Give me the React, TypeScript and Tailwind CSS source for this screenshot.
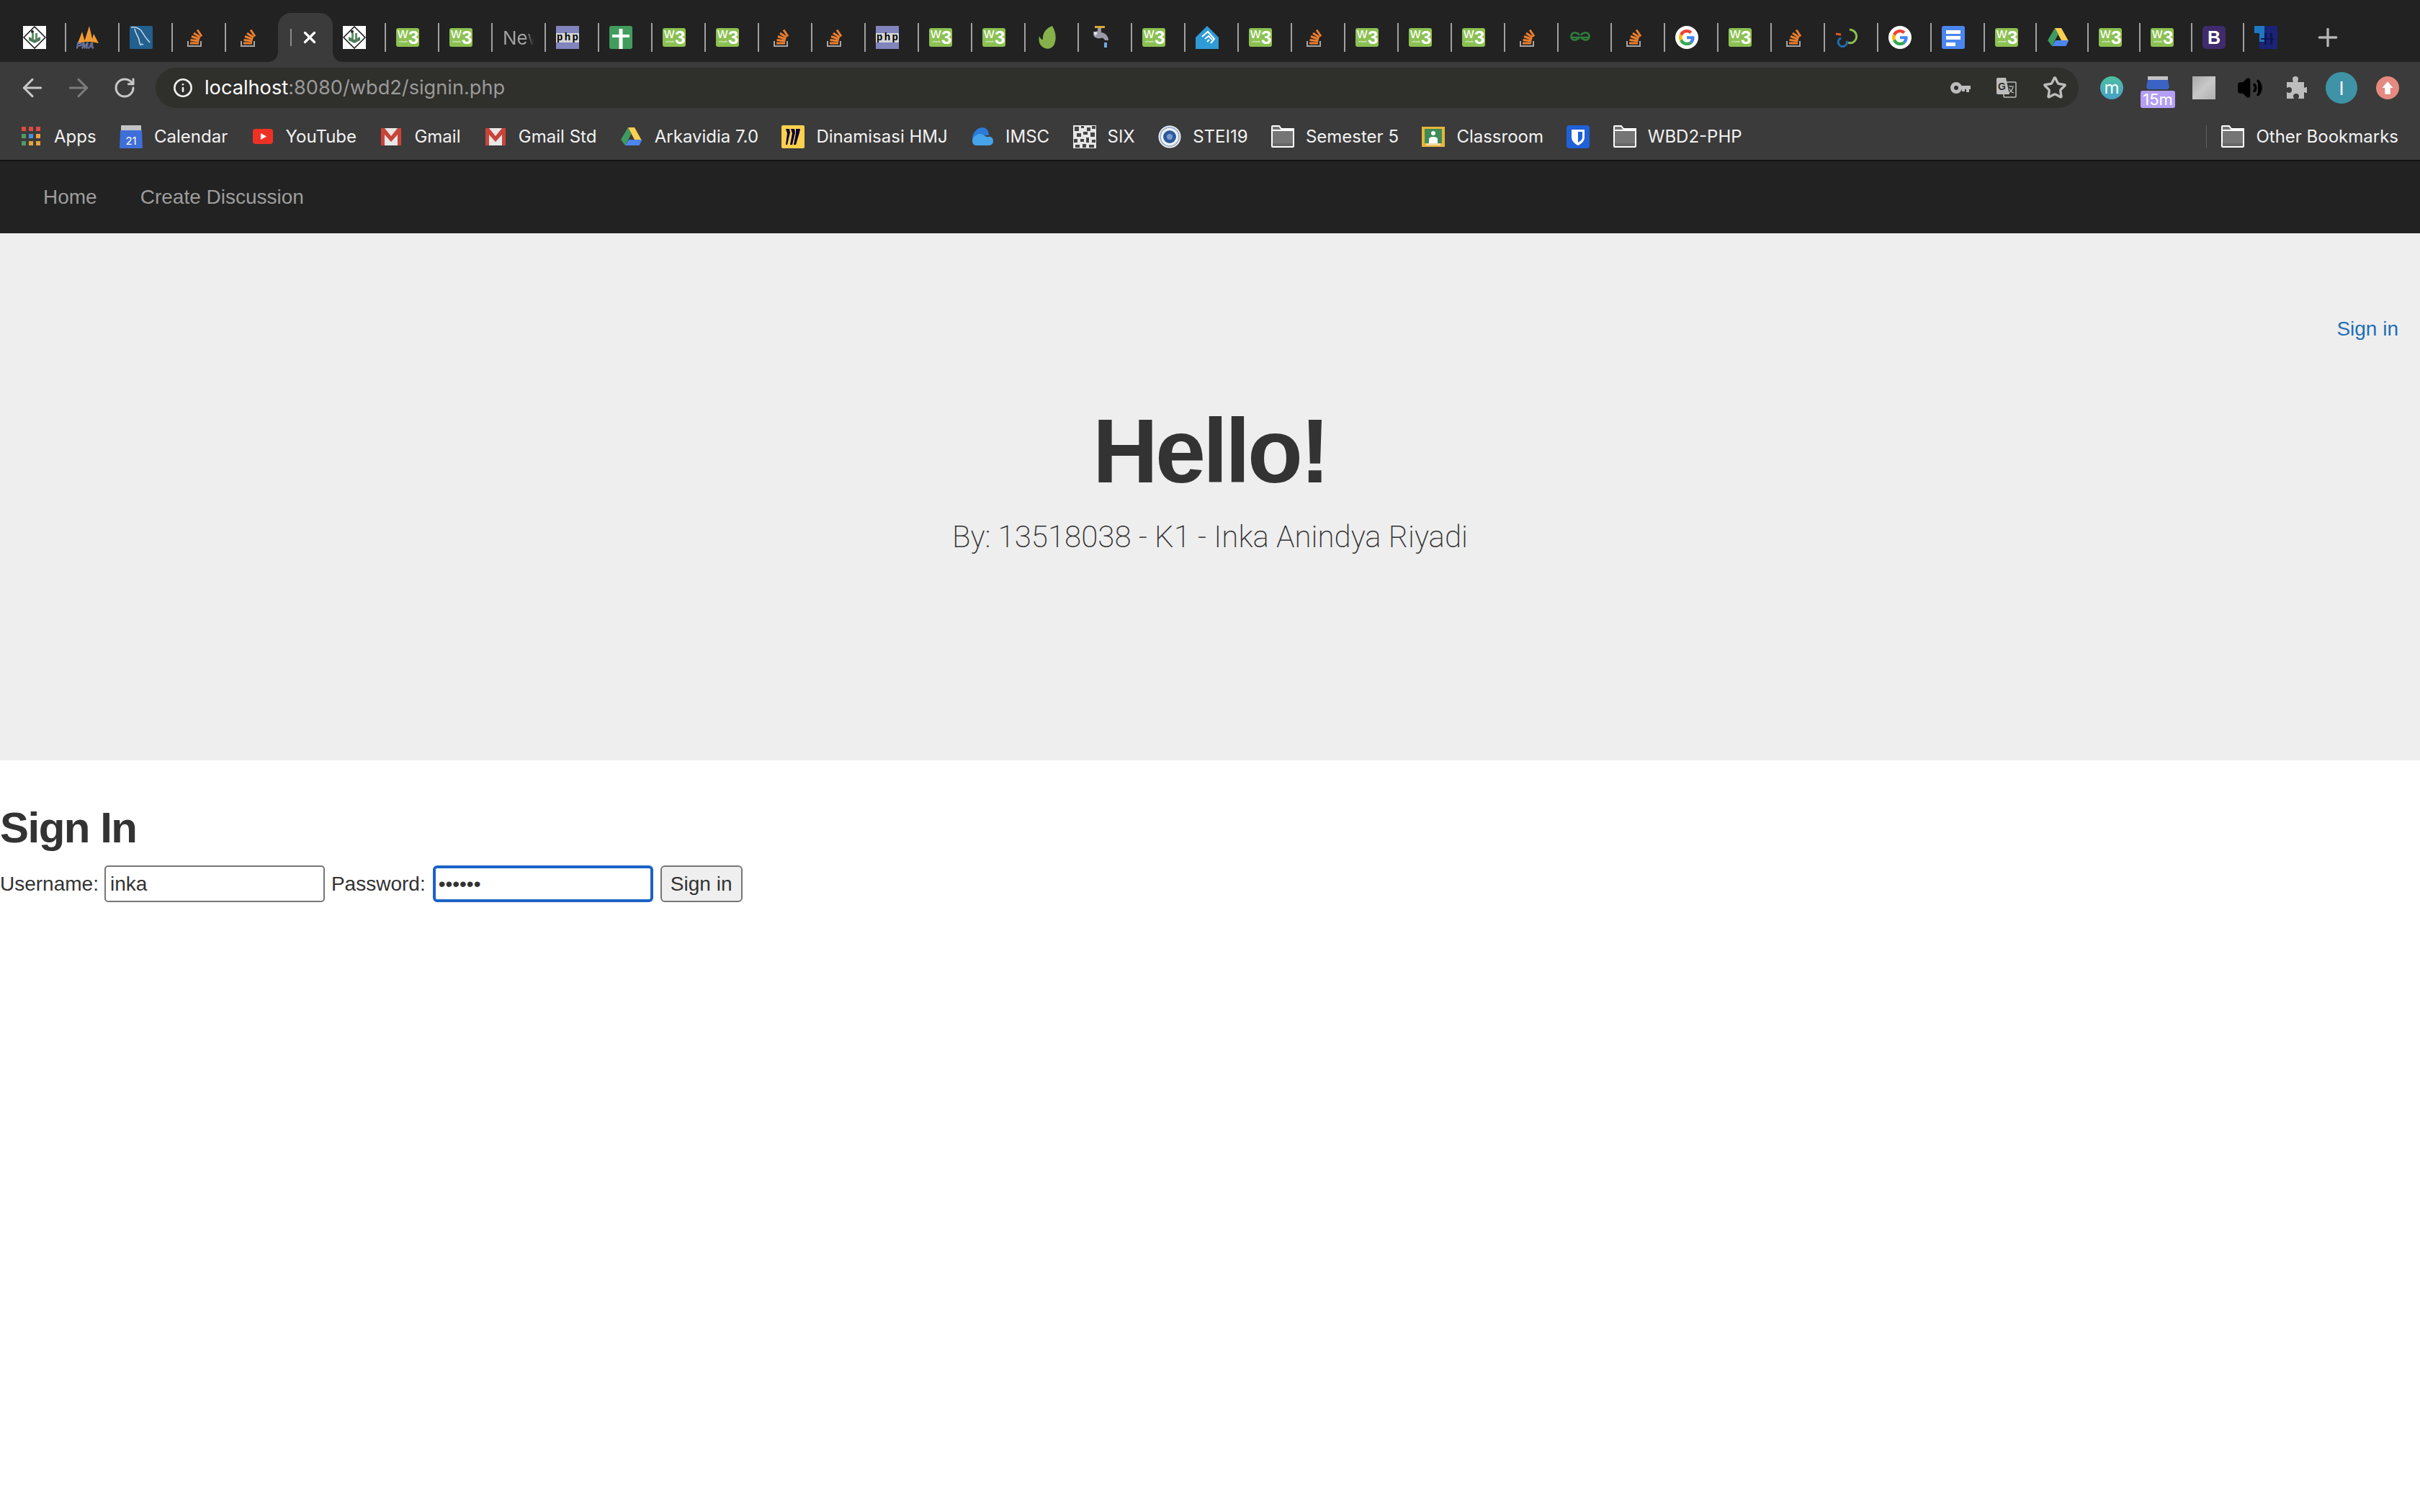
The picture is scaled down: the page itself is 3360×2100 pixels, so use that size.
import React from 'react';
import { ArrowLeft, ArrowRight, RotateCw, Info, Star, Plus, X, Volume2 } from 'lucide-react';

const Svg = ({ children, className = 'w-[32px] h-[32px]' }: { children: React.ReactNode; className?: string }) => (
  <svg viewBox="0 0 32 32" className={`shrink-0 ${className}`}>
    {children}
  </svg>
);

const W3 = () => (
  <Svg>
    <rect x="0" y="3" width="32" height="26" rx="3" fill="#8cc152" />
    <text x="2" y="17" fontSize="20" fill="#fff" fontFamily="Liberation Sans, sans-serif">w</text>
    <text x="17" y="25" fontSize="26" fontWeight="700" fill="#fff" fontFamily="Liberation Sans, sans-serif">3</text>
    <text x="4" y="23" fontSize="3.500" fill="#fff" fontFamily="Liberation Sans, sans-serif">schools</text>
  </Svg>
);

const StackOverflow = () => (
  <Svg>
    <path d="M7 21v7h18v-7" fill="none" stroke="#a6a6a6" strokeWidth="2" />
    <g stroke="#ee7f2d" strokeWidth="3">
      <path d="M10 24h12" />
      <path d="M10.500 19.500l12 1.500" />
      <path d="M12 14.500l11 4" />
      <path d="M15 10l9 6" />
      <path d="M20 5.500l6 9" />
    </g>
  </Svg>
);

const Tutorials = () => (
  <Svg>
    <rect width="32" height="32" fill="#fff" />
    <path d="M16 1L31 16 16 31 1 16z" fill="#fff" stroke="#111" strokeWidth="1.500" />
    <path d="M8 15l8 4 8-4v5l-8 4-8-4z" fill="#4e7a58" />
    <path d="M12 10h3v8h-3zM17 10h3v8h-3z" fill="#5f8f69" />
    <circle cx="13" cy="8" r="2" fill="#222" />
  </Svg>
);

const Pma = () => (
  <Svg>
    <path d="M2 24L8 8l4 14zM11 22L18 0l5 22zM21 22l3-11 7 13z" fill="#f19a32" />
    <text x="0" y="31" fontSize="11" fontWeight="700" fontStyle="italic" fill="#3f4a8c" stroke="#cfd3e8" strokeWidth="0.300" fontFamily="Liberation Sans, sans-serif">PMA</text>
  </Svg>
);

const MySql = () => (
  <Svg>
    <rect width="32" height="32" rx="2" fill="#21608f" />
    <path d="M2 2c8-1 14 3 17 9s6 8 9 12M7 4c1 7 5 10 6 15s1 7 3 8M16 25l3 1" fill="none" stroke="#c6d8e4" strokeWidth="1.600" />
  </Svg>
);

const Php = () => (
  <Svg>
    <rect width="32" height="32" fill="#8284bd" />
    <rect y="10" width="32" height="13" fill="#d6d6d6" />
    <text x="1" y="20" fontSize="14" fontWeight="700" fill="#000" fontFamily="Liberation Mono, monospace" textLength="30">php</text>
  </Svg>
);

const GreenPlus = () => (
  <Svg>
    <rect width="32" height="32" rx="3" fill="#439c5d" />
    <path d="M13.500 4h5v8H28v4h-9.500v16h-5V16H4v-4h9.500z" fill="#fff" />
  </Svg>
);

const Evernote = () => (
  <Svg>
    <path d="M23 0c5 8 6 18 3 25-2 5-7 8-13 6C7 29 3 23 5 14c1 3 3 5 5 5C9 11 14 3 23 0z" fill="#86b24c" />
  </Svg>
);

const Faucet = () => (
  <Svg>
    <rect x="8" y="0" width="14" height="3" fill="#d7a93a" />
    <path d="M12 3h5v6c6 1 10 5 10 11h-5c-1-3-3-4-6-3-5 1-10-1-10-6 0-3 3-3 6-4z" fill="#9a99a8" />
    <path d="M6 8l6 1-3 5z" fill="#e4e4ea" />
    <rect x="21" y="23" width="4" height="7" fill="#6ea8e8" />
  </Svg>
);

const DropHouse = () => (
  <Svg>
    <path d="M16 0l16 16v16H0V16z" fill="#2f9bd6" />
    <path d="M9 15l8-7 9 10-5 6M13 18l5-4 5 5M16 22l3-3" fill="none" stroke="#fff" strokeWidth="2" />
  </Svg>
);

const Gfg = () => (
  <Svg>
    <path d="M15 13c-2-4-9-5-11-1-2 5 2 9 7 7 2-1 3-2 4-3H5M17 13c2-4 9-5 11-1 2 5-2 9-7 7-2-1-3-2-4-3h10" fill="none" stroke="#2f7d3c" strokeWidth="2.500" />
  </Svg>
);

const GoogleG = () => (
  <Svg>
    <circle cx="16" cy="16" r="16" fill="#fff" />
    <g transform="translate(5 5) scale(.46)">
      <path fill="#EA4335" d="M24 9.500c3.540 0 6.710 1.220 9.210 3.600l6.850-6.850C35.900 2.380 30.470 0 24 0 14.620 0 6.510 5.380 2.560 13.220l7.980 6.190C12.430 13.720 17.740 9.500 24 9.500z" />
      <path fill="#4285F4" d="M46.980 24.550c0-1.570-.15-3.090-.38-4.550H24v9.020h12.940c-.58 2.960-2.260 5.480-4.780 7.180l7.730 6c4.510-4.180 7.090-10.360 7.090-17.650z" />
      <path fill="#FBBC05" d="M10.530 28.590c-.48-1.450-.76-2.990-.76-4.590s.27-3.140.76-4.590l-7.980-6.190C.92 16.460 0 20.120 0 24c0 3.880.92 7.540 2.560 10.780l7.970-6.190z" />
      <path fill="#34A853" d="M24 48c6.480 0 11.930-2.130 15.890-5.810l-7.730-6c-2.150 1.450-4.920 2.300-8.160 2.300-6.260 0-11.570-4.220-13.470-9.910l-7.980 6.190C6.510 42.620 14.620 48 24 48z" />
    </g>
  </Svg>
);

const Swirl = () => (
  <Svg>
    <path d="M1 11l7 1" stroke="#dd5a2b" strokeWidth="3" fill="none" />
    <path d="M8 17a6 6 0 1 0 8 4" stroke="#1f6fb5" strokeWidth="3" fill="none" />
    <path d="M20 5c8 1 11 7 9 13-2 5-7 7-11 5" stroke="#8cc152" strokeWidth="3" fill="none" />
  </Svg>
);

const Docs = () => (
  <Svg>
    <rect width="32" height="32" rx="3" fill="#4a86ee" />
    <path d="M6 6h20v5H6zM6 14h20v5H6zM6 23h13v5H6z" fill="#fff" />
  </Svg>
);

const Drive = () => (
  <Svg>
    <path d="M11 3h9l10 18h-9.500z" fill="#fbcf52" />
    <path d="M11 3l4.500 9L7 28 1 20z" fill="#3f9b60" />
    <path d="M7 28l5-8h18.500l-4 8z" fill="#4a86ee" />
  </Svg>
);

const Bootstrap = () => (
  <Svg>
    <rect width="32" height="32" rx="5" fill="#3f2c6d" />
    <text x="16" y="25" fontSize="25" fontWeight="700" fill="#fff" textAnchor="middle" fontFamily="Liberation Sans, sans-serif">B</text>
  </Svg>
);

const DarkBlue = () => (
  <Svg>
    <path d="M0 0h14v22H7V10H0z" fill="#1e78c2" />
    <path d="M14 0h18v32H7V22h7z" fill="#1b2376" />
    <path d="M14 10h3v16h-3zM22 10h3v16h-3zM9 17h18v2H9z" fill="#0f1550" />
  </Svg>
);

const tabIcons: Record<string, React.FC> = {
  w3: W3,
  so: StackOverflow,
  tp: Tutorials,
  pma: Pma,
  mysql: MySql,
  php: Php,
  plus: GreenPlus,
  evernote: Evernote,
  faucet: Faucet,
  drop: DropHouse,
  gfg: Gfg,
  g: GoogleG,
  swirl: Swirl,
  docs: Docs,
  drive: Drive,
  b: Bootstrap,
  blue: DarkBlue,
};

const tabs = [
  'tp', 'pma', 'mysql', 'so', 'so', 'active', 'tp', 'w3', 'w3', 'new', 'php', 'plus', 'w3', 'w3', 'so', 'so', 'php', 'w3', 'w3', 'evernote', 'faucet', 'w3',
  'drop', 'w3', 'so', 'w3', 'w3', 'w3', 'so', 'gfg', 'so', 'g', 'w3', 'so', 'swirl', 'g', 'docs', 'w3', 'drive', 'w3', 'w3', 'b', 'blue',
];

const ActiveTab = () => (
  <div className="relative flex h-[68px] w-[76px] -ml-[2px] shrink-0 items-center rounded-t-[18px] bg-[#3b3b3b] pl-[17px]">
    <svg viewBox="0 0 14 14" className="absolute bottom-0 -left-[14px] h-[14px] w-[14px]">
      <path d="M14 0v14H0c8 0 14-6 14-14z" fill="#3b3b3b" />
    </svg>
    <svg viewBox="0 0 14 14" className="absolute -right-[14px] bottom-0 h-[14px] w-[14px]">
      <path d="M0 0v14h14C6 14 0 8 0 0z" fill="#3b3b3b" />
    </svg>
    <div className="h-[24px] w-[2px] bg-[#8a8a8a]" />
    <X className="ml-[12px] h-[26px] w-[26px] text-white" strokeWidth={3} />
  </div>
);

const TabStrip = () => (
  <div className="flex h-[86px] items-start bg-[#222222] pt-[18px] pl-[18px]">
    {tabs.map((name, i) => {
      if (name === 'active') return <ActiveTab key={i} />;
      const Icon = tabIcons[name];
      return (
        <div key={i} className={`flex h-[68px] shrink-0 items-center justify-between pl-[14px] ${i > 36 ? 'w-[72px]' : 'w-[74px]'}`}>
          {name === 'new' ? (
            <span className="w-[44px] overflow-hidden bg-linear-to-r from-[#a3a3a3] from-70% to-[#222222] bg-clip-text font-['Inter',sans-serif] text-[26px] whitespace-nowrap text-transparent">
              New
            </span>
          ) : (
            <Icon />
          )}
          {i !== 4 && i !== 42 ? <div className="h-[40px] w-[2px] bg-[#a0a0a0]" /> : null}
        </div>
      );
    })}
    <Plus className="ml-[24px] mt-[14px] h-[40px] w-[40px] text-[#b5b5b5]" strokeWidth={2} />
  </div>
);

const Toolbar = () => (
  <div className="flex h-[64px] items-center bg-[#3b3b3b] pt-[8px] pl-[25px]">
    <ArrowLeft className="h-[40px] w-[40px] text-[#c8c8c8]" strokeWidth={1.8} />
    <ArrowRight className="ml-[24px] h-[40px] w-[40px] text-[#7c7c7c]" strokeWidth={1.8} />
    <RotateCw className="ml-[28px] mr-[4px] h-[32px] w-[32px] text-[#c8c8c8]" strokeWidth={2.2} />
    <div className="ml-[23px] flex h-[56px] w-[2670px] items-center rounded-full bg-[#2f2f2b] pr-[16px] pl-[24px]">
      <Info className="h-[28px] w-[28px] text-[#f0f0f0]" strokeWidth={2.2} />
      <div className="ml-[16px] font-['Inter',sans-serif] text-[27.200px] text-[#9a9a9a]">
        <span className="text-white">localhost</span>:8080/wbd2/signin.php
      </div>
      <div className="ml-auto flex items-center gap-[36px]">
        <svg viewBox="0 0 28 16" className="h-[16px] w-[28px]">
          <circle cx="8" cy="8" r="5.500" fill="none" stroke="#bdbdbd" strokeWidth="5" />
          <path d="M13 5h15v5h-2v4h-4v-4h-2v3h-4v-3h-3z" fill="#bdbdbd" />
        </svg>
        <svg viewBox="0 0 28 28" className="h-[28px] w-[28px]">
          <rect x="10" y="6" width="17" height="21" rx="1" fill="none" stroke="#bdbdbd" strokeWidth="1.500" />
          <path d="M2 0h11l5 23H2a2 2 0 0 1-2-2V2a2 2 0 0 1 2-2z" fill="#bdbdbd" />
          <text x="2" y="17" fontSize="14" fontWeight="700" fill="#2f2f2b" fontFamily="Liberation Sans, sans-serif">G</text>
          <path d="M17 12h7M20 11v2M23 13c-1 4-3 6-6 8M18 15c1 3 3 5 6 6" fill="none" stroke="#bdbdbd" strokeWidth="1.200" />
        </svg>
        <Star className="h-[34px] w-[34px] text-[#bdbdbd]" strokeWidth={2.4} />
      </div>
    </div>
    <div className="ml-[30px] flex h-[32px] w-[32px] items-center justify-center rounded-full bg-linear-to-b from-[#4fbfa0] to-[#46a0c8] font-['Inter',sans-serif] text-[24px] leading-none text-white">
      m
    </div>
    <div className="ml-[24px] flex h-[44px] w-[48px] flex-col items-center self-end">
      <svg viewBox="0 0 32 18" className="h-[18px] w-[32px]">
        <rect x="2" y="0" width="28" height="6" fill="#c4c4c4" />
        <path d="M2 5h28l2 10-2 3H2l-2-3z" fill="#3a63c4" />
      </svg>
      <div className="mt-[2px] flex h-[24px] w-[48px] items-center justify-center rounded-[3px] bg-[#b49ff5] font-['Inter',sans-serif] text-[22px] leading-none text-white">
        15m
      </div>
    </div>
    <div className="ml-[24px] h-[32px] w-[32px] bg-linear-to-br from-[#a8a8a8] via-[#c8c8c8] to-[#b0b0b0]" />
    <Volume2 className="ml-[30px] h-[36px] w-[36px] fill-black text-black" strokeWidth={2.4} />
    <svg viewBox="0 0 32 32" className="ml-[29px] h-[32px] w-[32px]">
      <path d="M12 4a4 4 0 0 1 8 0c0 2-1 3-1 4h9v8c1 0 2-1 3-1a4 4 0 0 1 0 8c-1 0-2-1-3-1v9h-8c0-1 1-2 1-3a4 4 0 0 0-8 0c0 1 1 2 1 3H4v-9c1 0 2 1 3 1a4 4 0 0 0 0-8c-1 0-2 1-3 1V8h9c0-1-1-2-1-4z" fill="#bdbdbd" />
    </svg>
    <div className="ml-[26px] flex h-[44px] w-[44px] items-center justify-center rounded-full bg-[#3f93a6] font-['Inter',sans-serif] text-[26px] text-white">
      I
    </div>
    <div className="ml-[26px] flex h-[32px] w-[32px] items-center justify-center rounded-full bg-[#e58a80]">
      <svg viewBox="0 0 16 16" className="h-[20px] w-[20px]">
        <path d="M8 1l6 7h-3v7H5V8H2z" fill="#fff" />
      </svg>
    </div>
  </div>
);

const Folder = () => (
  <Svg>
    <path d="M1 5V2a1 1 0 0 1 1-1h9l3 4h17v24a1 1 0 0 1-1 1H2a1 1 0 0 1-1-1z" fill="#757575" stroke="#fff" strokeWidth="2" />
    <path d="M1 7h30" stroke="#fff" strokeWidth="2" />
    <rect x="2" y="25" width="28" height="4" fill="#666" />
  </Svg>
);

const qrCells = ['M2 2h6v6H2z', 'M11 1h4v3h-4z', 'M19 3h5v5h-5z', 'M26 1h5v4h-5z', 'M5 11h6v5H5z', 'M14 9h6v4h-6z', 'M24 10h6v6h-6z', 'M1 19h5v5H1z', 'M10 19h5v4h-5z', 'M18 17h4v7h-4z', 'M26 20h5v4h-5z', 'M3 27h6v4H3z', 'M13 26h5v5h-5z', 'M22 27h7v4h-7z'];

const bookmarks: { label?: string; icon: React.ReactNode }[] = [
  {
    label: 'Apps',
    icon: (
      <Svg>
        <path d="M3 2h6v6H3zM13 2h6v6h-6zM23 2h6v6h-6z" fill="#e04a3f" />
        <path d="M3 12h6v6H3zM3 22h6v6H3z" fill="#4f9d5f" />
        <path d="M13 12h6v6h-6z" fill="#4a90e2" />
        <path d="M23 12h6v6h-6zM13 22h6v6h-6zM23 22h6v6h-6z" fill="#e8a33d" />
      </Svg>
    ),
  },
  {
    label: 'Calendar',
    icon: (
      <Svg>
        <rect x="2" y="0" width="28" height="8" rx="1" fill="#c4c4c4" />
        <path d="M1 7h30l1 25H0z" fill="#3f6fd8" />
        <text x="16" y="27" fontSize="15" fill="#fff" textAnchor="middle" fontFamily="Inter, sans-serif">21</text>
      </Svg>
    ),
  },
  {
    label: 'YouTube',
    icon: (
      <Svg>
        <rect x="2" y="5" width="28" height="21" rx="4" fill="#ee3124" />
        <path d="M13 11l8 4.500-8 4.500z" fill="#fff" />
      </Svg>
    ),
  },
  {
    label: 'Gmail',
    icon: (
      <Svg>
        <rect x="2" y="4" width="28" height="24" fill="#e8e8e8" />
        <path d="M2 4h5l9 11 9-11h5v24h-5V13l-9 10-9-10v15H2z" fill="#c8443a" />
      </Svg>
    ),
  },
  {
    label: 'Gmail Std',
    icon: (
      <Svg>
        <rect x="2" y="4" width="28" height="24" fill="#e8e8e8" />
        <path d="M2 4h5l9 11 9-11h5v24h-5V13l-9 10-9-10v15H2z" fill="#c8443a" />
      </Svg>
    ),
  },
  { label: 'Arkavidia 7.0', icon: <Drive /> },
  {
    label: 'Dinamisasi HMJ',
    icon: (
      <Svg>
        <rect width="32" height="32" rx="2" fill="#fdd04e" />
        <path d="M6 5h5l1 5-4 17H6l2-16zM13 5h5l1 5-4 17h-3l3-16zM20 5h6l-1 5-5 17h-3l3-16z" fill="#050038" />
      </Svg>
    ),
  },
  {
    label: 'IMSC',
    icon: (
      <Svg>
        <path d="M16 3c6 0 9 5 9 11h-17c-1 0-4 2-6 7C1 12 8 3 16 3z" fill="#2b7bd8" />
        <path d="M2 21c2-7 7-9 11-9 4 0 8 5 11 4 4-1 7 2 7 6 0 4-3 6-7 6H7c-3 0-5-3-5-7z" fill="#47a3ea" />
      </Svg>
    ),
  },
  {
    label: 'SIX',
    icon: (
      <Svg>
        <rect width="32" height="32" fill="#e6e6e6" />
        <path d={qrCells.join('')} fill="#444" />
      </Svg>
    ),
  },
  {
    label: 'STEI19',
    icon: (
      <Svg>
        <circle cx="16" cy="16" r="15.500" fill="#f4f6fa" />
        <circle cx="16" cy="16" r="13" fill="none" stroke="#9fb4d3" strokeWidth="2" />
        <circle cx="16" cy="16" r="9" fill="#2c5aa0" />
        <circle cx="16" cy="16" r="4" fill="#7b9ad0" />
      </Svg>
    ),
  },
  { label: 'Semester 5', icon: <Folder /> },
  {
    label: 'Classroom',
    icon: (
      <Svg>
        <rect x="0" y="2" width="32" height="28" fill="#e8b53c" />
        <rect x="4" y="5" width="24" height="20" fill="#3f8a57" />
        <circle cx="16" cy="11" r="3" fill="#fff" />
        <path d="M10 25v-6c0-2 3-3 6-3s6 1 6 3v6z" fill="#fff" />
        <rect x="6" y="25" width="20" height="3" fill="#f0d9a0" />
      </Svg>
    ),
  },
  {
    icon: (
      <Svg>
        <rect width="32" height="32" rx="4" fill="#2060d8" />
        <path d="M7 6h18v11c0 5-5 9-9 11-4-2-9-6-9-11z" fill="#fff" />
        <path d="M16 9h6v8c0 3-3 5-6 7z" fill="#2060d8" />
      </Svg>
    ),
  },
  { label: 'WBD2-PHP', icon: <Folder /> },
];

const Bookmark = ({ label, icon }: { label?: string; icon: React.ReactNode }) => (
  <div className="flex items-center gap-[16px] whitespace-nowrap">
    {icon}
    {label ? <span>{label}</span> : null}
  </div>
);

const BookmarksBar = () => (
  <div className="flex h-[74px] items-center gap-[32.400px] border-b-2 border-[#141414] bg-[#3b3b3b] pt-[8px] pr-[30px] pl-[27px] font-['Inter',sans-serif] text-[24px] text-[#f2f2f2]">
    {bookmarks.map((b, i) => (
      <Bookmark key={i} label={b.label} icon={b.icon} />
    ))}
    <div className="ml-auto flex h-[32px] items-center border-l border-[#5f5f5f] pl-[20px]">
      <Bookmark label="Other Bookmarks" icon={<Folder />} />
    </div>
  </div>
);

const Navbar = () => (
  <nav className="flex h-[100px] items-center gap-[60px] bg-[#222222] pl-[60px] text-[28px] text-[#9d9d9d]">
    <a>Home</a>
    <a>Create Discussion</a>
  </nav>
);

const Hero = () => (
  <section className="h-[732px] bg-[#eeeeee] pt-[113px] text-[#333333]">
    <div className="pr-[30px] text-right text-[28px] leading-[40px] text-[#1f6fb8]">Sign in</div>
    <h1 className="mt-[80px] text-center text-[126px] leading-[139px] font-bold tracking-[-4px]">Hello!</h1>
    <p className="mt-[20px] text-center font-['Roboto',sans-serif] text-[42px] leading-[60px] font-extralight">
      By: 13518038 - K1 - Inka Anindya Riyadi
    </p>
  </section>
);

const SignInForm = () => (
  <section className="pt-[61px] text-[28px] text-[#333333]">
    <h2 className="text-[60px] leading-[66px] font-bold tracking-[-1.500px]">Sign In</h2>
    <form className="mt-[19px] flex items-center">
      <label htmlFor="username" className="mr-[8px]">Username:</label>
      <input id="username" defaultValue="inka" className="mr-[9px] h-[51px] w-[306px] rounded-[5px] border-2 border-[#767676] bg-white px-[6px] text-[#333333]" />
      <label htmlFor="password" className="mr-[10px]">Password:</label>
      <input id="password" type="password" defaultValue="secret" className="mr-[10px] h-[51px] w-[306px] rounded-[6px] border-4 border-[#1d62c6] bg-white px-[4px] text-[#333333]" />
      <button type="button" className="h-[51px] w-[114px] rounded-[6px] border-2 border-[#767676] bg-[#efefef] text-[#333333]">
        Sign in
      </button>
    </form>
  </section>
);

export default function App() {
  return (
    <div className="min-h-screen bg-white font-['Liberation_Sans',Arial,sans-serif]">
      <TabStrip />
      <Toolbar />
      <BookmarksBar />
      <Navbar />
      <Hero />
      <SignInForm />
    </div>
  );
}
